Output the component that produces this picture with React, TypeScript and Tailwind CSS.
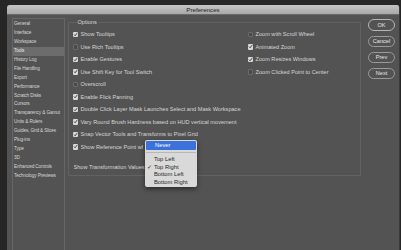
import { useState } from "react"

const sections = [
  "General",
  "Interface",
  "Workspace",
  "Tools",
  "History Log",
  "File Handling",
  "Export",
  "Performance",
  "Scratch Disks",
  "Cursors",
  "Transparency & Gamut",
  "Units & Rulers",
  "Guides, Grid & Slices",
  "Plug-ins",
  "Type",
  "3D",
  "Enhanced Controls",
  "Technology Previews",
]

const leftOptions: [string, boolean][] = [
  ["Show Tooltips", true],
  ["Use Rich Tooltips", false],
  ["Enable Gestures", true],
  ["Use Shift Key for Tool Switch", true],
  ["Overscroll", false],
  ["Enable Flick Panning", true],
  ["Double Click Layer Mask Launches Select and Mask Workspace", true],
  ["Vary Round Brush Hardness based on HUD vertical movement", true],
  ["Snap Vector Tools and Transforms to Pixel Grid", true],
]

const rightOptions: [string, boolean][] = [
  ["Zoom with Scroll Wheel", false],
  ["Animated Zoom", true],
  ["Zoom Resizes Windows", true],
  ["Zoom Clicked Point to Center", false],
]

function Checkbox({ checked }: { checked: boolean }) {
  if (!checked) {
    return <span className="w-[5.5px] h-[5.5px] shrink-0 rounded-[1px] border border-[#6a6a6a] bg-[#4a4a4a]" />
  }
  return (
    <span className="w-[5.5px] h-[5.5px] shrink-0 rounded-[1px] bg-[#d8d8d8] flex items-center justify-center">
      <svg width="5" height="5" viewBox="0 0 10 10">
        <path d="M2 5.2 L4.2 7.5 L8.2 2.3" fill="none" stroke="#333" strokeWidth="1.8" />
      </svg>
    </span>
  )
}

function OptionRow({ label, checked, clip }: { label: string; checked: boolean; clip?: string }) {
  return (
    <div className="h-[12.5px] flex items-center gap-[2.5px] whitespace-nowrap">
      <Checkbox checked={checked} />
      <span className={clip ? clip + " overflow-hidden" : ""}>{label}</span>
    </div>
  )
}

export default function App() {
  const [active] = useState("Tools")

  return (
    <div
      className="relative w-[401px] h-[250px] overflow-hidden bg-[#262626] pl-[7px] pt-[5px] text-[5.6px] leading-[8px] text-[#d6d6d6]"
      style={{ fontFamily: '"Liberation Sans", Arial, sans-serif' }}
    >
      <div className="w-[393px] h-[245px] flex flex-col bg-[#535353] rounded-t-[3px] overflow-hidden border-r border-[#3a3a3a]">
        {/* title bar */}
        <div className="h-[10px] shrink-0 flex items-center justify-center bg-gradient-to-b from-[#c4c4c4] to-[#a9a9a9] border-b border-[#6b6b6b] text-[#222] text-[6.2px]">
          Preferences
        </div>

        <div className="flex items-start pl-[5px] pt-[3px] flex-1">
          {/* sidebar */}
          <div className="w-[53px] h-[240px] shrink-0 border border-[#666] bg-[#535353] pt-[1px] overflow-hidden">
            {sections.map((s) => (
              <div
                key={s}
                className={
                  "h-[8.9px] flex items-center pl-[1px] whitespace-nowrap text-[4.7px] tracking-[-0.12px] " +
                  (s === active ? "bg-[#6c6c6c] text-[#e8e8e8]" : "")
                }
              >
                {s}
              </div>
            ))}
          </div>

          {/* options */}
          <fieldset className="ml-[3px] w-[293px] border border-[#626262] pl-[3.5px] pr-[4px] pt-[2px] pb-[1px] rounded-[1px]">
            <legend className="ml-[4px] px-[1px]">Options</legend>
            <div className="flex">
              <div className="w-[175px]">
                {leftOptions.map(([label, checked]) => (
                  <OptionRow key={label} label={label} checked={checked} />
                ))}
                <OptionRow label="Show Reference Point when Using Transform" checked clip="w-[62px]" />
              </div>
              <div>
                {rightOptions.map(([label, checked]) => (
                  <OptionRow key={label} label={label} checked={checked} />
                ))}
              </div>
            </div>
            <div className="mt-[8px] h-[12.5px] flex items-center pl-[1px]">
              <span className="w-[71px] overflow-hidden whitespace-nowrap">Show Transformation Values:</span>
            </div>
          </fieldset>

          {/* buttons */}
          <div className="ml-[7px] mt-[1px] flex flex-col gap-[4.5px]">
            {["OK", "Cancel", "Prev", "Next"].map((b, i) => (
              <div
                key={b}
                className={
                  "w-[27px] flex items-center justify-center rounded-full border border-[#9a9a9a] text-[#e6e6e6] text-[5.6px] " +
                  (i === 0 ? "h-[12px] border-[#b5b5b5]" : "h-[11.5px]")
                }
              >
                {b}
              </div>
            ))}
          </div>
        </div>
      </div>

      {/* popup menu over the Show Transformation Values select */}
      <div className="absolute left-[145px] top-[140px] w-[52px] rounded-[2px] bg-[#d9d9d9] text-[#262626] shadow-[0_2px_5px_rgba(0,0,0,0.5)] py-[1px] text-[5.8px]">
        <div className="h-[8.5px] mx-[1px] rounded-[1px] bg-[#3b72d9] text-white flex items-center pl-[9px]">Never</div>
        <div className="my-[2.5px] h-px bg-[#b8b8b8] mx-[1px]" />
        {["Top Left", "Top Right", "Bottom Left", "Bottom Right"].map((o) => (
          <div key={o} className="relative h-[7.5px] flex items-center pl-[9px]">
            {o === "Top Right" && <span className="absolute left-[2px]">✓</span>}
            {o}
          </div>
        ))}
      </div>
    </div>
  )
}
